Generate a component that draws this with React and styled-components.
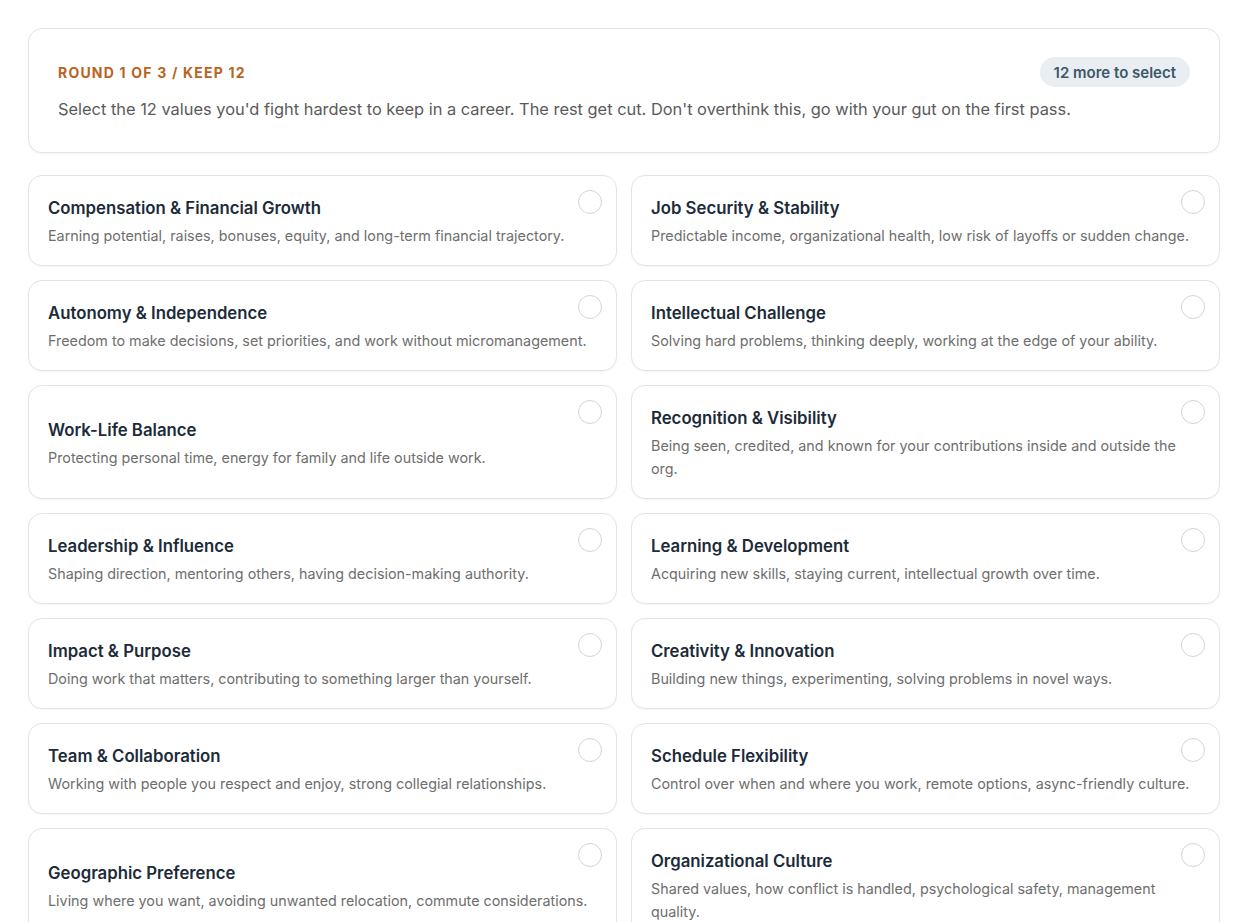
import styled, { createGlobalStyle } from "styled-components";

const values = [
  ["Compensation & Financial Growth", "Earning potential, raises, bonuses, equity, and long-term financial trajectory."],
  ["Job Security & Stability", "Predictable income, organizational health, low risk of layoffs or sudden change."],
  ["Autonomy & Independence", "Freedom to make decisions, set priorities, and work without micromanagement."],
  ["Intellectual Challenge", "Solving hard problems, thinking deeply, working at the edge of your ability."],
  ["Work-Life Balance", "Protecting personal time, energy for family and life outside work."],
  ["Recognition & Visibility", "Being seen, credited, and known for your contributions inside and outside the org."],
  ["Leadership & Influence", "Shaping direction, mentoring others, having decision-making authority."],
  ["Learning & Development", "Acquiring new skills, staying current, intellectual growth over time."],
  ["Impact & Purpose", "Doing work that matters, contributing to something larger than yourself."],
  ["Creativity & Innovation", "Building new things, experimenting, solving problems in novel ways."],
  ["Team & Collaboration", "Working with people you respect and enjoy, strong collegial relationships."],
  ["Schedule Flexibility", "Control over when and where you work, remote options, async-friendly culture."],
  ["Geographic Preference", "Living where you want, avoiding unwanted relocation, commute considerations."],
  ["Organizational Culture", "Shared values, how conflict is handled, psychological safety, management quality."],
];

const GlobalStyle = createGlobalStyle`
  body {
    margin: 0;
    background: #ffffff;
    font-family: Inter, "Noto Sans", sans-serif;
    -webkit-font-smoothing: antialiased;
  }
`;

const Page = styled.div`
  padding: 28px;
  display: flex;
  flex-direction: column;
  gap: 22px;
`;

const Header = styled.section`
  border: 1px solid #e4e4e4;
  border-radius: 14px;
  background: #fff;
  box-shadow: 0 1px 2px rgba(0, 0, 0, 0.05);
  padding: 28px 29px 30px;
  display: flex;
  flex-direction: column;
  gap: 9px;
`;

const HeaderTop = styled.div`
  display: flex;
  justify-content: space-between;
  align-items: center;
`;

const RoundLabel = styled.span`
  font-size: 14px;
  font-weight: 700;
  letter-spacing: 1.2px;
  color: #b8641f;
`;

const Remaining = styled.span`
  background: #e8eef2;
  color: #3c5868;
  font-size: 15px;
  font-weight: 600;
  height: 30px;
  padding: 0 14px;
  border-radius: 15px;
  display: flex;
  align-items: center;
`;

const Intro = styled.p`
  margin: 0;
  font-size: 16.4px;
  line-height: 26px;
  color: #5a5a5a;
`;

const Grid = styled.div`
  display: grid;
  grid-template-columns: 1fr 1fr;
  gap: 14px;
`;

const Card = styled.button`
  position: relative;
  text-align: left;
  font-family: inherit;
  background: #fff;
  border: 1px solid #e4e4e4;
  border-radius: 14px;
  box-shadow: 0 1px 2px rgba(0, 0, 0, 0.04);
  padding: 20px 19px 18px;
  display: flex;
  flex-direction: column;
  justify-content: center;
  gap: 4px;
  cursor: pointer;
`;

const Title = styled.h3`
  margin: 0;
  font-size: 16.75px;
  line-height: 24px;
  font-weight: 600;
  color: #1c2b39;
`;

const Desc = styled.p`
  margin: 0;
  font-size: 14.35px;
  line-height: 23px;
  color: #6e6e6e;
`;

const Radio = styled.span`
  position: absolute;
  top: 14px;
  right: 14px;
  width: 22px;
  height: 22px;
  border-radius: 50%;
  border: 1.5px solid #d4d4d4;
  background: #fff;
`;

export default function App() {
  return (
    <>
      <GlobalStyle />
      <Page>
        <Header>
          <HeaderTop>
            <RoundLabel>ROUND 1 OF 3 / KEEP 12</RoundLabel>
            <Remaining>12 more to select</Remaining>
          </HeaderTop>
          <Intro>
            Select the 12 values you'd fight hardest to keep in a career. The rest get cut. Don't overthink this, go with your gut on the first pass.
          </Intro>
        </Header>
        <Grid>
          {values.map(([title, desc]) => (
            <Card key={title}>
              <Radio />
              <Title>{title}</Title>
              <Desc>{desc}</Desc>
            </Card>
          ))}
        </Grid>
      </Page>
    </>
  );
}
